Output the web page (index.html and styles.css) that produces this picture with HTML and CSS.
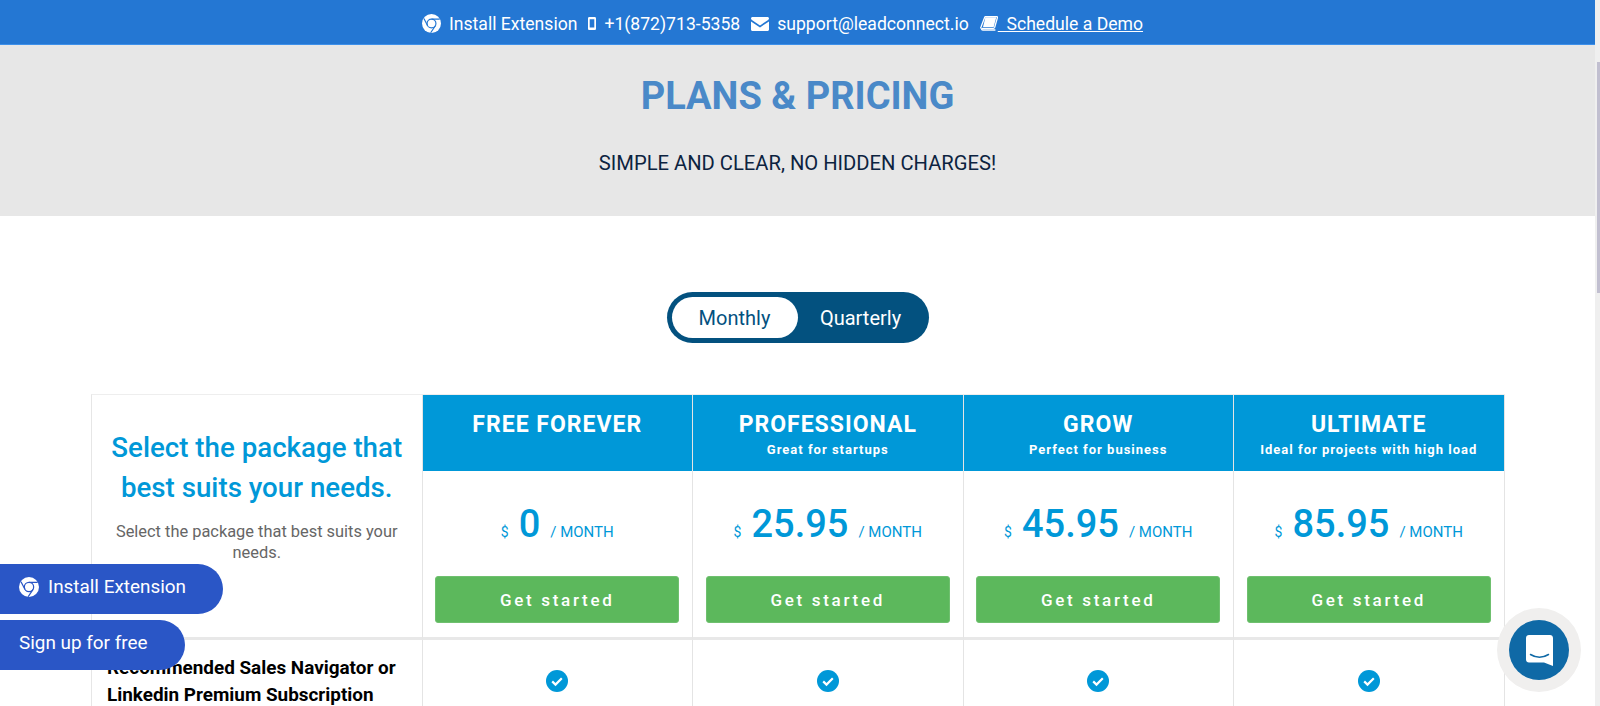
FILE: index.html
```html
<!DOCTYPE html>
<html lang="en">
<head>
  <meta charset="UTF-8">
  <title>Plans &amp; Pricing</title>
  <link rel="stylesheet" href="styles.css">
</head>
<body>
<svg class="icon-defs" width="0" height="0">
  <symbol id="chrome" viewBox="0 0 24 24">
    <circle cx="12" cy="12" r="12" fill="currentColor"/>
    <circle cx="12" cy="12" r="5.6" fill="none" stroke="var(--cut)" stroke-width="1.5"/>
    <path d="M12 6.4h10.4M7.1 14.8 2.4 5.8M16.9 14.8l-6 8.9" fill="none" stroke="var(--cut)" stroke-width="1.5"/>
  </symbol>
</svg>

<div class="window">
  <div class="page">
    <!-- top bar -->
    <div class="topbar">
      <span class="topbar-item">
        <svg class="ico ico-chrome"><use href="#chrome"/></svg>
        Install Extension
      </span>
      <span class="topbar-item">
        <svg class="ico ico-mobile" viewBox="0 0 8 13"><path fill-rule="evenodd" d="M1.3 0h5.400C7.400 0 8 .6 8 1.300v10.400c0 .7-.6 1.300-1.300 1.300H1.300C.6 13 0 12.400 0 11.700V1.300C0 .6.600 0 1.300 0ZM1.700 2.200v8.200h4.600V2.200Z" fill="currentColor"/></svg>
        +1(872)713-5358
      </span>
      <span class="topbar-item">
        <svg class="ico ico-mail" viewBox="0 0 18 14"><path d="M1.500 0h15C17.300 0 18 .7 18 1.500c0 .6-.4 1.200-.9 1.500L9 8.400.9 3C.4 2.700 0 2.100 0 1.500 0 .7.700 0 1.500 0ZM0 4.500l9 5.900 9-5.900v8C18 13.300 17.300 14 16.500 14h-15C.7 14 0 13.300 0 12.500Z" fill="currentColor"/></svg>
        support@leadconnect.io
      </span>
      <a class="topbar-item topbar-link" href="#">
        <svg class="ico ico-book" viewBox="0 0 18 15"><path d="M5 .6h11.600c.7 0 1 .5.8 1.100l-2.700 9.600c-.2.600-.7 1-1.300 1H2.800c-.7 0-1.200.4-1.200.9s.5.800 1.200.8h12.600" fill="none" stroke="currentColor" stroke-width="1.300"/><path d="M5 .6 1.100 10.800c-.3.700-.5 1.300-.5 1.800" fill="none" stroke="currentColor" stroke-width="1.300"/><path d="M5.400 1.200h10.900l-2.600 9.800H3Z" fill="currentColor"/></svg>
        <span class="topbar-link-text">&nbsp;&nbsp;Schedule a Demo</span>
      </a>
    </div>

    <div class="hero">
      <h1>PLANS &amp; PRICING</h1>
      <p>SIMPLE AND CLEAR, NO HIDDEN CHARGES!</p>
    </div>

    <div class="toggle-wrap">
      <div class="billing-toggle">
        <button class="toggle-btn active">Monthly</button>
        <button class="toggle-btn">Quarterly</button>
      </div>
    </div>

    <div class="pricing">
      <div class="intro">
        <h2>Select the package that best suits your needs.</h2>
        <p>Select the package that best suits your needs.</p>
      </div>

      <div class="plan">
        <div class="plan-head"><h3>FREE FOREVER</h3></div>
        <div class="plan-price"><span class="cur">$</span><span class="amount">0</span><span class="per">/ MONTH</span></div>
        <button class="get-btn">Get started</button>
      </div>
      <div class="plan">
        <div class="plan-head"><h3>PROFESSIONAL</h3><small>Great for startups</small></div>
        <div class="plan-price"><span class="cur">$</span><span class="amount">25.95</span><span class="per">/ MONTH</span></div>
        <button class="get-btn">Get started</button>
      </div>
      <div class="plan">
        <div class="plan-head"><h3>GROW</h3><small>Perfect for business</small></div>
        <div class="plan-price"><span class="cur">$</span><span class="amount">45.95</span><span class="per">/ MONTH</span></div>
        <button class="get-btn">Get started</button>
      </div>
      <div class="plan">
        <div class="plan-head"><h3>ULTIMATE</h3><small>Ideal for projects with high load</small></div>
        <div class="plan-price"><span class="cur">$</span><span class="amount">85.95</span><span class="per">/ MONTH</span></div>
        <button class="get-btn">Get started</button>
      </div>

      <div class="feature-name">Recommended Sales Navigator or Linkedin Premium Subscription</div>
      <div class="feature-cell"><svg class="check" viewBox="0 0 22 22"><circle cx="11" cy="11" r="11"/><path d="m6.200 11.400 3.300 3.200 6.300-6.400"/></svg></div>
      <div class="feature-cell"><svg class="check" viewBox="0 0 22 22"><circle cx="11" cy="11" r="11"/><path d="m6.200 11.400 3.300 3.200 6.300-6.400"/></svg></div>
      <div class="feature-cell"><svg class="check" viewBox="0 0 22 22"><circle cx="11" cy="11" r="11"/><path d="m6.200 11.400 3.300 3.200 6.300-6.400"/></svg></div>
      <div class="feature-cell"><svg class="check" viewBox="0 0 22 22"><circle cx="11" cy="11" r="11"/><path d="m6.200 11.400 3.300 3.200 6.300-6.400"/></svg></div>
    </div>

    <!-- floating stuff -->
    <a class="float-pill pill-install" href="#">
      <svg class="ico ico-chrome-lg"><use href="#chrome"/></svg>
      Install Extension
    </a>
    <a class="float-pill pill-signup" href="#">Sign up for free</a>

    <div class="chat-ring">
      <div class="chat-btn">
        <svg viewBox="0 0 27 31" width="27" height="31"><path d="M3 0h21c1.700 0 3 1.300 3 3v28l-9-3.500H3c-1.700 0-3-1.300-3-3V3C0 1.300 1.300 0 3 0Z" fill="#fff"/><path d="M4.500 19.500c5.500 3.400 12.500 3.400 18 0" fill="none" stroke="#0f69a6" stroke-width="1.500" stroke-linecap="round"/></svg>
      </div>
    </div>
  </div>

  <div class="scrollbar"><div class="scrollbar-thumb"></div></div>
</div>
</body>
</html>
```

FILE: styles.css
```css
* {
  box-sizing: border-box;
}

html, body {
  margin: 0;
  padding: 0;
  height: 706px;
  overflow: hidden;
}

body {
  font-family: Roboto, "Liberation Sans", sans-serif;
  background: #fff;
}

.icon-defs {
  position: absolute;
}

.window {
  display: flex;
  height: 706px;
}

.page {
  position: relative;
  flex: 1;
  min-width: 0;
  overflow: hidden;
}

.scrollbar {
  width: 5px;
  padding-top: 62px;
  padding-left: 2px;
  background: #efefef;
}

.scrollbar-thumb {
  width: 3px;
  height: 231px;
  background: #c1bfd0;
}

/* top bar */
.topbar {
  display: flex;
  justify-content: center;
  align-items: center;
  gap: 11px;
  height: 45px;
  padding: 3px 30px 0 0;
  background: #2477d3;
  border-bottom: 1px solid #3d90ea;
  color: #fff;
  font-size: 17.600px;
  --cut: #2477d3;
}

.topbar-item {
  display: flex;
  align-items: center;
  gap: 8px;
  color: #fff;
  text-decoration: none;
}

.topbar-link {
  gap: 0;
}

.topbar-link-text {
  text-decoration: underline;
  white-space: pre;
}

.ico {
  display: block;
  flex: none;
}

.ico-chrome {
  width: 19px;
  height: 19px;
}

.ico-mobile {
  width: 8px;
  height: 13px;
}

.ico-mail {
  width: 18px;
  height: 14px;
}

.ico-book {
  width: 18px;
  height: 15px;
}

/* hero */
.hero {
  height: 171px;
  padding-top: 28px;
  background: #e7e7e7;
  text-align: center;
}

.hero h1 {
  margin: 0;
  font-size: 38px;
  line-height: 46px;
  font-weight: 700;
  color: #4a89c8;
}

.hero p {
  margin: 32px 0 0;
  font-size: 20.200px;
  line-height: 24px;
  color: #0c2340;
}

/* toggle */
.toggle-wrap {
  display: flex;
  justify-content: center;
  padding-top: 76px;
}

.billing-toggle {
  display: flex;
  width: 262px;
  height: 51px;
  padding: 5px;
  border-radius: 26px;
  background: #03517f;
}

.toggle-btn {
  flex: 1;
  border: 0;
  border-radius: 21px;
  background: transparent;
  color: #fff;
  font-family: inherit;
  font-size: 20px;
  cursor: pointer;
}

.toggle-btn.active {
  flex: none;
  width: 126px;
  background: #fff;
  color: #03517f;
}

/* table */
.pricing {
  display: grid;
  grid-template-columns: 330.500px repeat(4, 270.500px);
  width: 1414px;
  margin: 51px 0 0 91px;
  border-top: 1px solid #eee;
  border-left: 1px solid #e6e6e6;
}

.intro,
.plan {
  height: 245px;
  border-right: 1px solid #e4e4e4;
  border-bottom: 3px solid #e8e8e8;
}

.intro {
  padding: 33px 10px 0;
  text-align: center;
}

.intro h2 {
  margin: 0;
  font-size: 27.700px;
  line-height: 40px;
  font-weight: 500;
  color: #0098d8;
}

.intro p {
  margin: 13px 0 0;
  font-size: 16.400px;
  line-height: 21px;
  color: #666;
}

.plan {
  display: flex;
  flex-direction: column;
  align-items: center;
}

.plan-head {
  width: 100%;
  height: 76px;
  padding-top: 16px;
  background: #0098d8;
  color: #fff;
  text-align: center;
}

.plan-head h3 {
  margin: 0;
  font-size: 23px;
  line-height: 28px;
  font-weight: 700;
  letter-spacing: 1px;
}

.plan-head small {
  display: block;
  margin-top: 3px;
  font-size: 13px;
  line-height: 16px;
  font-weight: 700;
  letter-spacing: 1px;
}

.plan-price {
  display: flex;
  justify-content: center;
  align-items: baseline;
  height: 105px;
  padding-top: 29px;
  color: #0098d8;
}

.cur {
  font-size: 14px;
  margin-right: 10px;
}

.amount {
  font-size: 38px;
  line-height: 48px;
  font-weight: 500;
}

.per {
  font-size: 15px;
  margin-left: 10px;
}

.get-btn {
  width: 244px;
  height: 47px;
  border: 1px solid #6fc06f;
  border-radius: 3px;
  background: #5cb85c;
  color: #fff;
  font-family: inherit;
  font-size: 17px;
  font-weight: 500;
  letter-spacing: 2.700px;
  cursor: pointer;
}

.feature-name {
  padding: 14px 12px 0 15px;
  border-right: 1px solid #e4e4e4;
  font-size: 18.900px;
  line-height: 27px;
  font-weight: 700;
  color: #000;
}

.feature-cell {
  display: flex;
  justify-content: center;
  height: 100px;
  padding-top: 30px;
  border-right: 1px solid #e4e4e4;
}

.check {
  width: 22px;
  height: 22px;
}

.check circle {
  fill: #0098d8;
}

.check path {
  fill: none;
  stroke: #fff;
  stroke-width: 2.200;
}

/* floating buttons */
.float-pill {
  position: absolute;
  left: 0;
  display: flex;
  align-items: center;
  gap: 9px;
  height: 50px;
  padding: 0 0 5px 19px;
  border-radius: 0 25px 25px 0;
  background: #2a56c6;
  color: #fff;
  font-size: 18.900px;
  text-decoration: none;
  --cut: #2a56c6;
}

.pill-install {
  top: 564px;
  width: 223px;
}

.pill-signup {
  top: 620px;
  width: 185px;
}

.ico-chrome-lg {
  width: 20px;
  height: 20px;
}

/* chat widget */
.chat-ring {
  position: absolute;
  left: 1497px;
  top: 608px;
  display: flex;
  justify-content: center;
  align-items: center;
  width: 84px;
  height: 84px;
  border-radius: 50%;
  background: #f0efee;
}

.chat-btn {
  display: flex;
  justify-content: center;
  align-items: center;
  width: 60px;
  height: 60px;
  border-radius: 50%;
  background: #0f69a6;
}
```
